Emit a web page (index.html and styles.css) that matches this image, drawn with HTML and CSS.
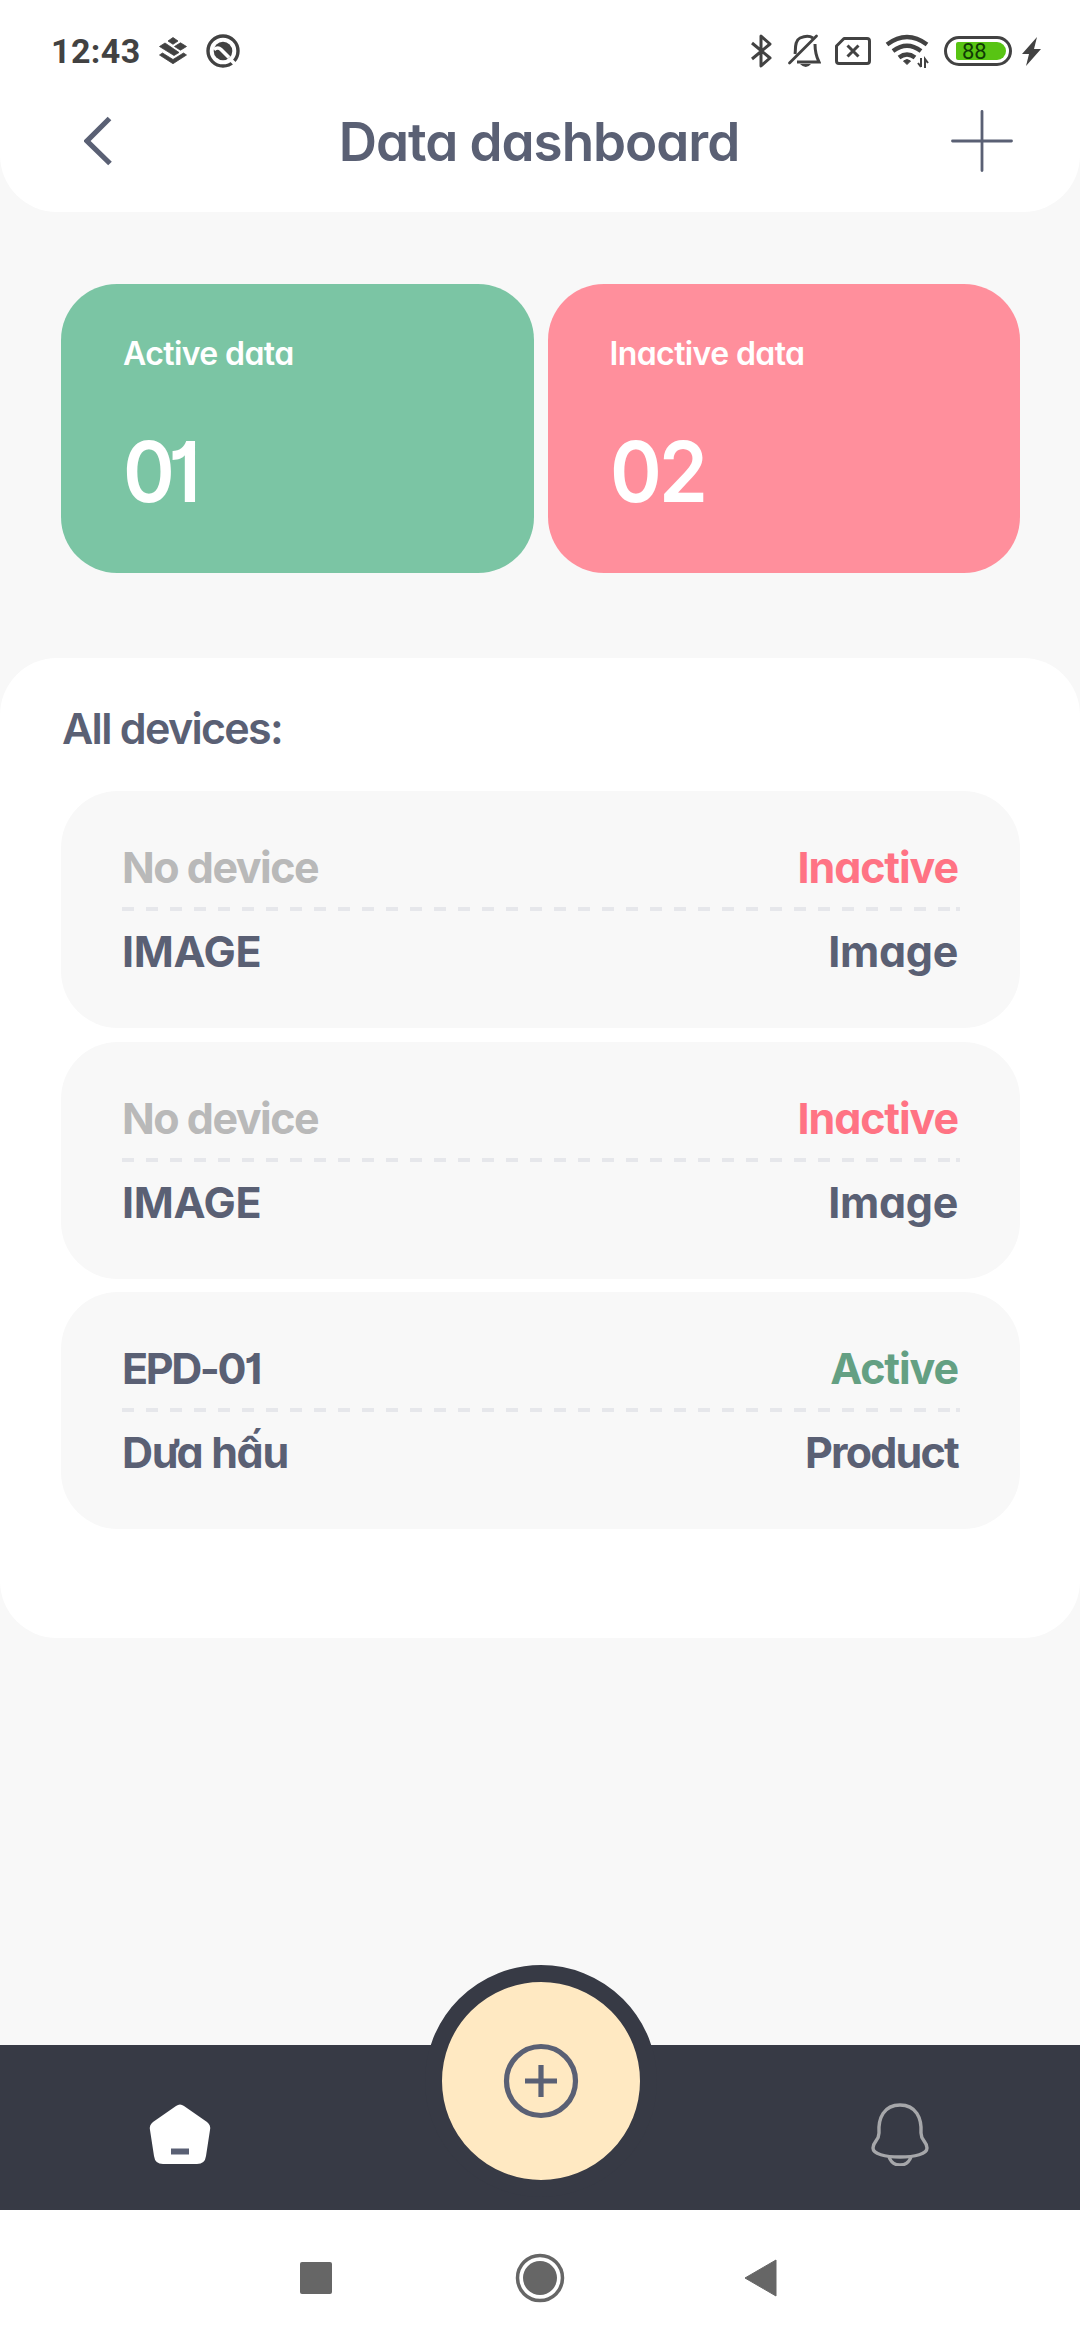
FILE: index.html
```html
<!DOCTYPE html>
<html lang="en">
<head>
<meta charset="utf-8">
<title>Data dashboard</title>
<link rel="stylesheet" href="styles.css">
</head>
<body>
<div class="screen">
  <header class="header">
    <div class="status">
      <span class="clock">12:43</span>
      <svg class="layers" width="30" height="30" viewBox="158 37 30 30" fill="#424242" stroke="#424242" stroke-width=".8" stroke-linejoin="round"><path d="M173 38.500l5 3.500-5 3.300-5-3.300zM180.500 43.800l6 3.700-6 3.700-6-3.700zM165 44l14 9.500-5 3L159.500 47.500zM159.500 56l3-2 10.500 6.500 10.500-6.500 3 2-13.500 8.700z"/></svg>
      <svg class="orbit" width="36" height="36" viewBox="205 33 36 36"><circle cx="223" cy="51" r="15" fill="none" stroke="#424242" stroke-width="3.400"/><circle cx="223" cy="51" r="9.300" fill="#424242"/><path d="M214 49.500q4-3 7 0l8 8M229 58l11 11" fill="none" stroke="#fff" stroke-width="3.600"/></svg>
      <svg class="bt" width="22" height="36" viewBox="751 33 22 36" fill="none" stroke="#424242" stroke-width="3" stroke-linejoin="round"><path d="M752 43l18 15-9 8V36l9 8-18 15"/></svg>
      <svg class="mute" width="34" height="36" viewBox="787 33 34 36"><path d="M795 54c1-4-1-13 5-16q8-3.500 13 0M815 44c0 8 1 12 4 18H797" fill="none" stroke="#424242" stroke-width="3"/><path d="M789.500 63l27-27" stroke="#424242" stroke-width="2.800" stroke-linecap="round"/><path d="M800 64h11q-5 6-11 0z" fill="#424242"/></svg>
      <svg class="sim" width="38" height="30" viewBox="834 36 38 30" fill="none" stroke="#424242" stroke-width="3"><path d="M844 38.500h23q2.500 0 2.500 2.500v20q0 2.500-2.500 2.500h-28q-2.500 0-2.500-2.500V46zM847.500 45.500l11 11m0-11l-11 11" stroke-linejoin="round"/></svg>
      <svg class="wifi" width="44" height="34" viewBox="885 35 44 34" fill="none" stroke="#424242" stroke-width="4.400"><path d="M887 45.500Q907 30.500 927 45.500M893 52q14-10.500 28 0M899 58.500q8-6 16 0"/><path d="M903.500 62q3.500-3 7 0l-3.500 3.500z" fill="#424242" stroke-width="1"/><path d="M921 59v9m-3-4l3 4M925 69V60l3 4" stroke-width="2"/></svg>
      <span class="battery"><span class="charge">88</span></span>
      <svg class="bolt" width="20" height="30" viewBox="1022 36 20 30" fill="#424242"><path d="M1037 37l-15 17h7l-3 12 15-17h-7z"/></svg>
    </div>
    <div class="titlebar">
      <svg width="29" height="50" viewBox="84 116 29 50"><path d="M109.500 118.500L87 141l23 22.500" fill="none" stroke="#5a6074" stroke-width="5.200"/></svg>
      <h1 class="title">Data dashboard</h1>
      <svg width="62" height="62" viewBox="950 110 62 62"><path d="M951.500 141h59M981 111.500v59" stroke="#5a6074" stroke-width="2.800" stroke-linecap="round"/></svg>
    </div>
  </header>

  <section class="stats">
    <div class="stat active"><div class="label">Active data</div><div class="number one">01</div></div>
    <div class="stat inactive"><div class="label">Inactive data</div><div class="number">02</div></div>
  </section>

  <main class="panel">
    <h2 class="heading">All devices:</h2>
    <div class="list">
      <article class="card">
        <div class="row"><span class="none">No device</span><span class="off">Inactive</span></div>
        <div class="dashes"></div>
        <div class="row"><span class="caps">IMAGE</span><span class="kind">Image</span></div>
      </article>
      <article class="card">
        <div class="row"><span class="none">No device</span><span class="off">Inactive</span></div>
        <div class="dashes"></div>
        <div class="row"><span class="caps">IMAGE</span><span class="kind">Image</span></div>
      </article>
      <article class="card">
        <div class="row"><span class="code">EPD-01</span><span class="on">Active</span></div>
        <div class="dashes"></div>
        <div class="row"><span class="fruit">Dưa hấu</span><span class="product">Product</span></div>
      </article>
    </div>
  </main>

  <nav class="tabs">
    <svg width="64" height="64" viewBox="148 2102 64 64"><path d="M176 2106q4-3 8 0l23 16q4 3 3 8l-4 26q-1 8-9 8h-34q-8 0-9-8l-4-26q-1-5 3-8z" fill="#fff"/><path d="M171 2151.500h18" stroke="#5a6074" stroke-width="6"/></svg>
    <svg width="60" height="64" viewBox="870 2102 60 64" fill="none" stroke="#a6a7aa" stroke-width="3.400"><path d="M879 2133c-1-15 5-28 21-28s22 13 21 28c0 8 6 8 6 15 0 6-12 9-27 9s-27-3-27-9c0-7 6-7 6-15z"/><path d="M889 2157q3 8 11 8t11-8"/></svg>
    <div class="add"><svg width="76" height="76" viewBox="-38 -38 76 76" fill="none" stroke="#5a6074" stroke-width="5.200"><circle r="34.500"/><path d="M-16 0h32M0-16v32"/></svg></div>
  </nav>
  <footer class="system">
    <span class="recent"></span>
    <svg width="50" height="50" viewBox="-25 -25 50 50"><circle r="22.500" fill="none" stroke="#666" stroke-width="3.500"/><circle r="17" fill="#666"/></svg>
    <svg class="back" width="33" height="38" viewBox="0 0 33 38"><path d="M1 19L32 1v36z" fill="#666" stroke="#666" stroke-linejoin="round"/></svg>
  </footer>
</div>
</body>
</html>
```
FILE: styles.css
```css
* { box-sizing: border-box; }
body { margin: 0; background: #f8f8f8; font-family: Inter, Lato, sans-serif; font-feature-settings: "cv11", "cv01"; color: #5a6074; }
svg { display: block; flex: none; }
.screen { height: 2340px; width: 1080px; display: flex; flex-direction: column; overflow: hidden; }

.header { height: 212px; flex: none; background: #fff; border-radius: 0 0 57px 57px; }
.status { height: 102px; display: flex; align-items: center; padding: 0 38px 0 51px; }
.clock { font: 700 34px/40px Roboto, sans-serif; color: #424242; width: 107px; letter-spacing: .4px; white-space: nowrap; }
.layers { margin-right: 17px; }
.orbit { margin-right: auto; }
.bt { margin-right: 14px; }
.mute { margin-right: 13px; }
.sim { margin-right: 13px; }
.wifi { margin-right: 15px; }
.battery { width: 68px; height: 30px; border: 3px solid #424242; border-radius: 15px; padding: 3px 3px 3px 9px; margin-right: 10px; }
.charge { display: block; height: 18px; padding-left: 6px; background: #58c413; border-radius: 2px 9px 9px 2px; font: 400 22px/20px Roboto, sans-serif; color: #113b05; }
.titlebar { height: 78px; display: flex; align-items: center; justify-content: space-between; padding: 0 67px 0 84px; }
.title { margin: 2px 0 0 14px; font-size: 53px; line-height: 66px; font-weight: 600; letter-spacing: -1.05px; white-space: nowrap; }

.stats { flex: none; display: flex; gap: 14px; padding: 72px 60px 0 61px; }
.stat { flex: 1; height: 289px; padding: 50px 62px; border-radius: 56px; color: #fff; white-space: nowrap; }
.active { background: #7bc5a4; }
.inactive { background: #ff8f9c; }
.label { font-size: 32px; line-height: 40px; font-weight: 600; letter-spacing: -.6px; }
.number { margin-top: 47px; font-size: 84.5px; line-height: 100px; font-weight: 600; letter-spacing: -3px; transform: scaleX(.93); transform-origin: left; }
.one { letter-spacing: -7px; }

.panel { height: 980px; flex: none; margin-top: 85px; padding: 43px 60px 0 61px; background: #fff; border-radius: 57px; }
.heading { margin: 0 0 36px 1px; font-size: 43px; line-height: 54px; font-weight: 600; letter-spacing: -1.7px; }
.list { display: grid; gap: 13.5px; }
.card { height: 237px; padding: 49px 60px 0 61px; border-radius: 57px; background: #f8f8f8; }
.row { display: flex; justify-content: space-between; font-size: 43px; line-height: 54px; font-weight: 700; white-space: nowrap; }
.row span:last-child { padding-right: 2px; }
.dashes { height: 4px; margin: 13px 0 13px; background: linear-gradient(#e6e7eb, #e6e7eb) right / 4px 4px no-repeat, repeating-linear-gradient(90deg, #e6e7eb 0 12px, transparent 12px 24px); }
.none { color: #b9b9b9; letter-spacing: -1.5px; }
.off { color: #ff7384; letter-spacing: -1.1px; }
.on { color: #64a083; letter-spacing: -1.1px; }
.caps, .kind { letter-spacing: -.3px; }
.code { letter-spacing: -2.4px; }
.fruit { letter-spacing: -1.3px; }
.product { letter-spacing: -1.8px; }

.tabs { position: relative; height: 165px; flex: none; margin-top: auto; padding: 12px 150px 0 148px; display: flex; align-items: center; justify-content: space-between; background: #373a45; }
.add { position: absolute; left: 425px; top: -80px; width: 232px; height: 232px; border: 17px solid #373a45; border-radius: 50%; background: #ffe9c2; display: flex; align-items: center; justify-content: center; }
.system { height: 130px; flex: none; padding: 6px 303px 0 300px; display: flex; align-items: center; justify-content: space-between; background: #fff; }
.system svg:not(.back) { margin-left: 4px; }
.recent { width: 32px; height: 32px; background: #666; border-radius: 2px; }
```
